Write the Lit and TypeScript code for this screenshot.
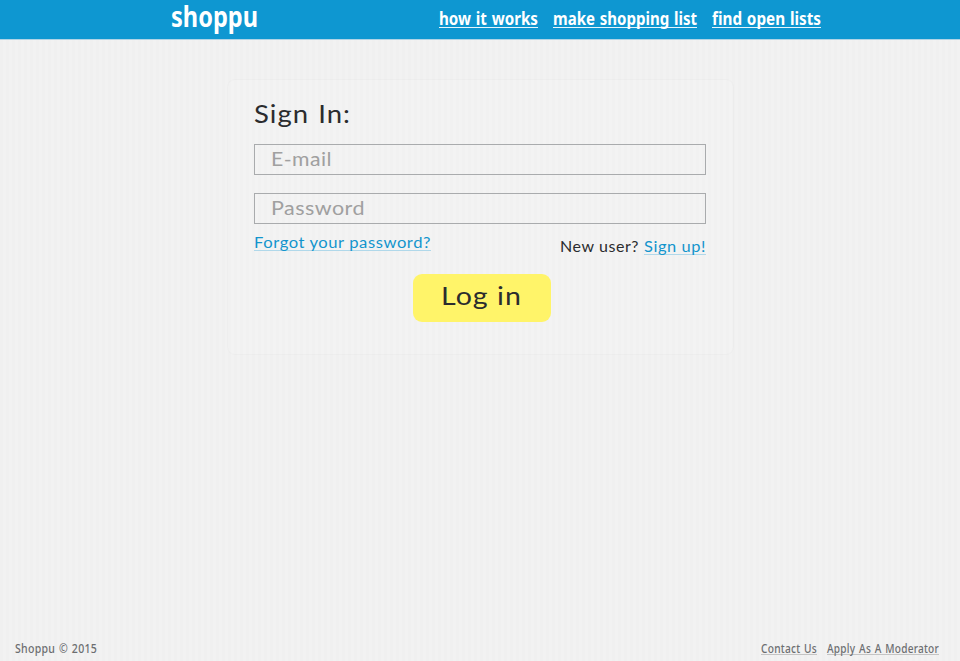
import { LitElement, html, css } from "lit";
import { customElement, property } from "lit/decorators.js";

/** A single line of text fitted to a given width. */
@customElement("fit-text")
class FitText extends LitElement {
  @property({ type: String }) text = "";
  @property({ type: Number }) w = 100;
  @property({ type: Number }) h = 20;
  @property({ type: Number }) base = 16;
  static styles = css`
    :host { display: block; flex: none; }
    svg { display: block; overflow: visible; }
    text { fill: currentColor; font-variant-ligatures: none; }
  `;
  render() {
    return html`<svg width=${this.w} height=${this.h}>
      <text x="0" y=${this.base} textLength=${this.w} lengthAdjust="spacingAndGlyphs">${this.text}</text>
    </svg>`;
  }
}

@customElement("app-root")
class AppRoot extends LitElement {
  static styles = css`
    :host {
      display: flex; flex-direction: column; height: 661px; box-sizing: border-box;
      background: repeating-linear-gradient(90deg, #f0f0f0 0 3px, #f2f2f2 3px 6px);
      font-family: Lato, sans-serif; color: #2b2c2e;
    }
    * { box-sizing: border-box; }
    a { text-decoration: none; color: inherit; display: block; }
    header, footer { font-family: "Noto Sans", sans-serif; display: flex; flex: none; }
    header {
      height: 40px; background: #0e97d1; color: #fff; padding-left: 171px;
      border-bottom: 1px solid #b0d4e6; font-weight: 700;
    }
    .logo { font-size: 29px; width: 268px; }
    nav { display: flex; font-size: 18.5px; word-spacing: 1px; }
    nav a { height: 28px; border-bottom: 1px solid #e8f5fb; }
    nav a + a { margin-left: 15px; }
    main { flex: 1; padding: 39px 0 0 227px; }
    .card {
      width: 507px; height: 276px; border: 1px solid rgba(0, 0, 0, 0.015); border-radius: 8px;
      background: rgba(255, 255, 255, 0.08); background-clip: padding-box; padding: 20px 27px 0 26px;
    }
    .title { font-size: 24.5px; letter-spacing: 0.9px; word-spacing: 1px; }
    .field {
      width: 452px; height: 31px; border: 1px solid #a9abad; padding-left: 16px;
      color: #a0a0a0; font-size: 18.5px; letter-spacing: 0.4px;
    }
    .email { margin-top: 14px; }
    .password { margin-top: 18px; }
    .row { display: flex; justify-content: space-between; width: 452px; font-size: 14.5px; letter-spacing: 0.5px; }
    .row a { color: #1395cd; border-bottom: 1px solid #b0d8ea; height: 17px; }
    .forgot { margin-top: 10px; }
    .new { display: flex; gap: 5px; margin-top: 14px; }
    .login {
      display: block; width: 138px; height: 48px; border: 0; border-radius: 9px; background: #fff469;
      margin: 19px 0 0 159px; padding: 0 0 0 28px; color: #2b2c2e;
      font: 24.5px Lato, sans-serif; letter-spacing: 0.9px;
    }
    footer { height: 24px; padding: 0 21px 0 15px; color: #6c6e70; font-size: 12.3px; font-weight: 500; letter-spacing: 0.3px; word-spacing: 1px; }
    .links { display: flex; gap: 10px; margin-left: auto; }
    .links a { height: 18px; border-bottom: 1px solid #c4c4c4; }
  `;
  render() {
    return html`
      <header>
        <a class="logo"><fit-text text="shoppu" w="87" h="38" base="27"></fit-text></a>
        <nav>
          <a><fit-text text="how it works" w="99" h="26" base="25"></fit-text></a>
          <a><fit-text text="make shopping list" w="144" h="26" base="25"></fit-text></a>
          <a><fit-text text="find open lists" w="109" h="26" base="25"></fit-text></a>
        </nav>
      </header>
      <main>
        <section class="card">
          <fit-text class="title" text="Sign In:" w="97" h="30" base="23"></fit-text>
          <div class="field email"><fit-text text="E-mail" w="61" h="29" base="21"></fit-text></div>
          <div class="field password"><fit-text text="Password" w="94" h="29" base="21"></fit-text></div>
          <div class="row">
            <a class="forgot"><fit-text text="Forgot your password?" w="177" h="16" base="14"></fit-text></a>
            <div class="new">
              <fit-text text="New user?" w="79" h="16" base="14"></fit-text>
              <a><fit-text text="Sign up!" w="62" h="16" base="14"></fit-text></a>
            </div>
          </div>
          <button class="login"><fit-text text="Log in" w="81" h="48" base="31"></fit-text></button>
        </section>
      </main>
      <footer>
        <fit-text text="Shoppu © 2015" w="82" h="18" base="16"></fit-text>
        <div class="links">
          <a><fit-text text="Contact Us" w="56" h="17" base="16"></fit-text></a>
          <a><fit-text text="Apply As A Moderator" w="112" h="17" base="16"></fit-text></a>
        </div>
      </footer>
    `;
  }
}
